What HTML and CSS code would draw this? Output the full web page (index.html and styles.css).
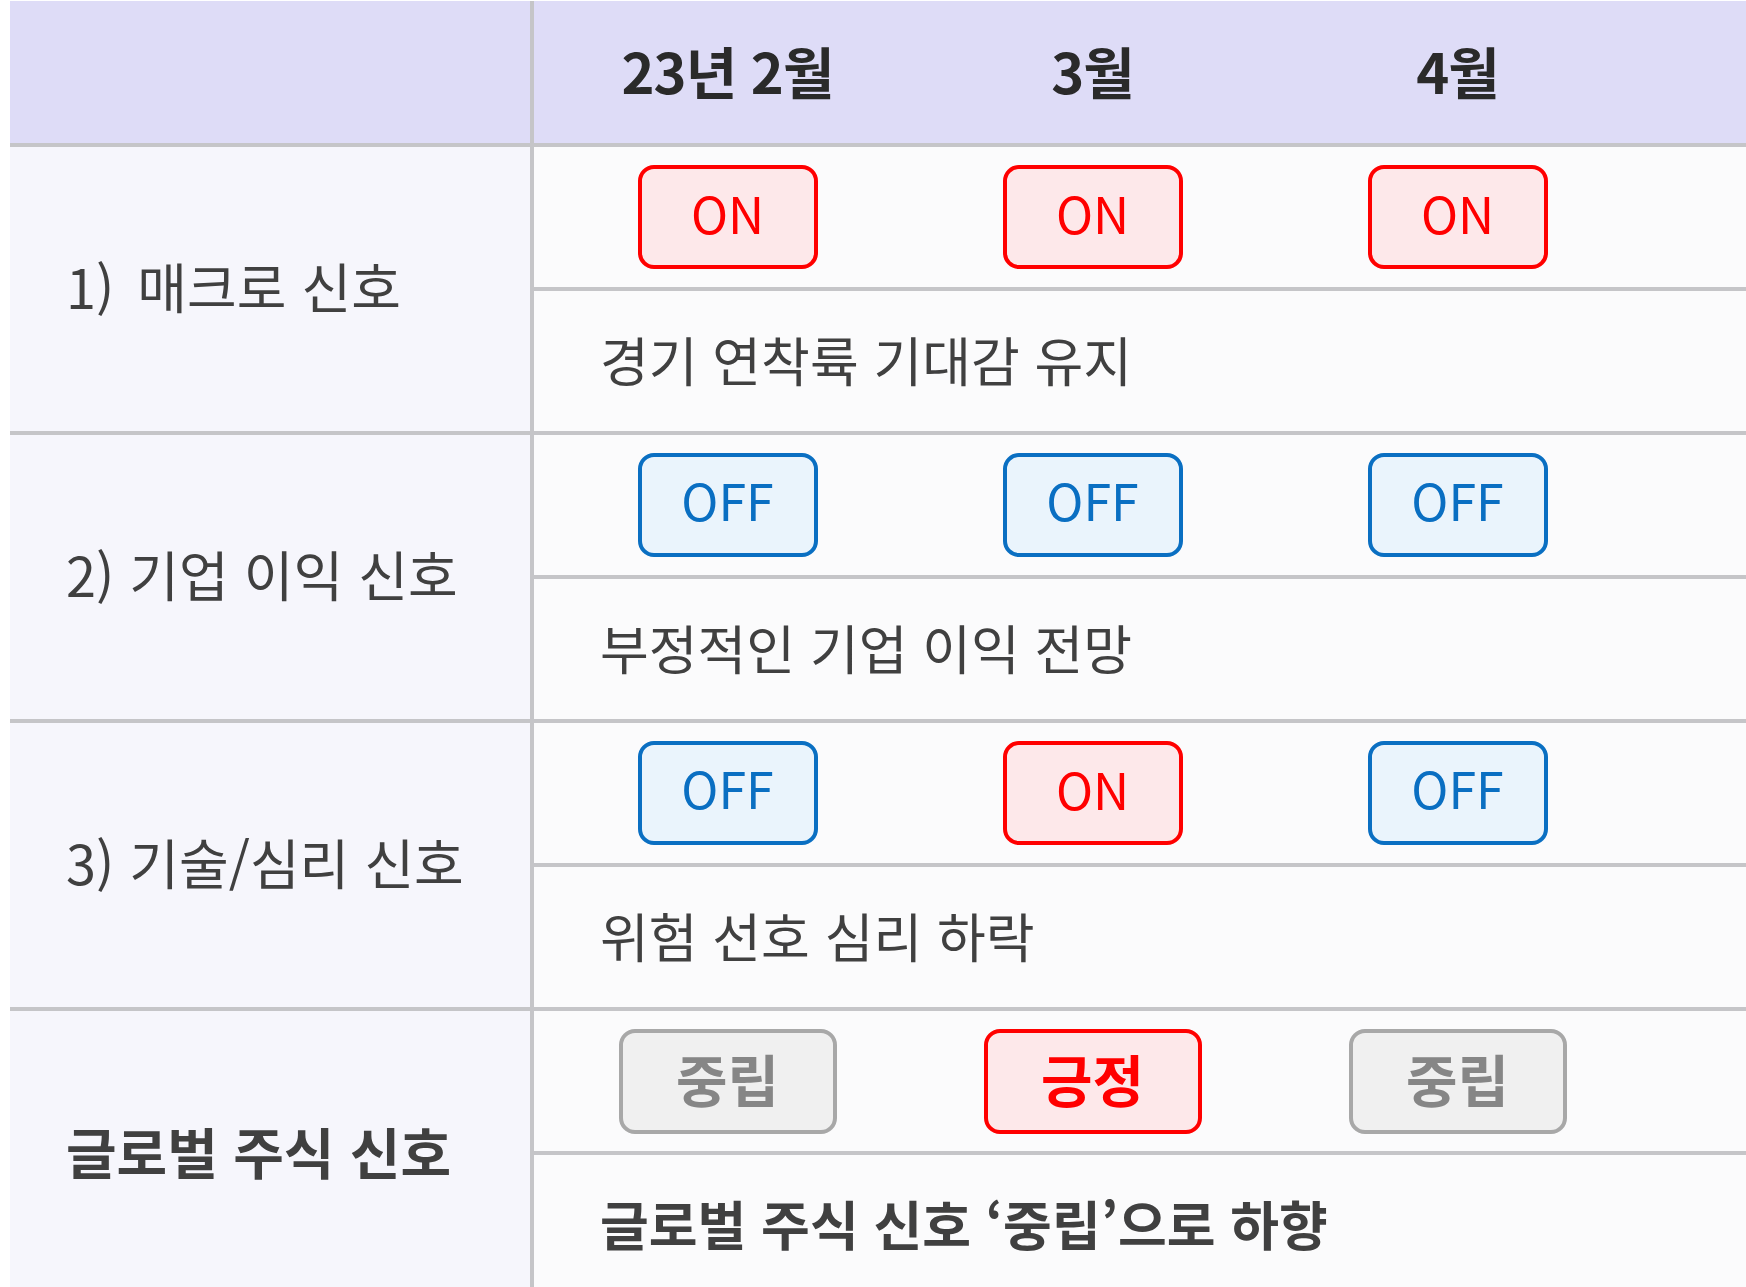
FILE: index.html
```html
<!DOCTYPE html>
<html lang="ko">
<head>
<meta charset="utf-8">
<title>글로벌 주식 신호</title>
<link rel="stylesheet" href="styles.css">
</head>
<body>
<div class="table">
  <div class="head">
    <div class="head-label"></div>
    <div class="months">
      <div class="month">23년 2월</div>
      <div class="month">3월</div>
      <div class="month">4월</div>
    </div>
  </div>

  <div class="group">
    <div class="label">1)<span class="gap"></span> 매크로 신호</div>
    <div class="badges">
      <span class="badge on">ON</span>
      <span class="badge on">ON</span>
      <span class="badge on">ON</span>
    </div>
    <div class="desc">경기 연착륙 기대감 유지</div>
  </div>

  <div class="group">
    <div class="label">2) 기업 이익 신호</div>
    <div class="badges">
      <span class="badge off">OFF</span>
      <span class="badge off">OFF</span>
      <span class="badge off">OFF</span>
    </div>
    <div class="desc">부정적인 기업 이익 전망</div>
  </div>

  <div class="group">
    <div class="label">3) 기술/심리 신호</div>
    <div class="badges">
      <span class="badge off">OFF</span>
      <span class="badge on">ON</span>
      <span class="badge off">OFF</span>
    </div>
    <div class="desc">위험 선호 심리 하락</div>
  </div>

  <div class="group">
    <div class="label bold">글로벌 주식 신호</div>
    <div class="badges">
      <span class="badge neutral">중립</span>
      <span class="badge positive">긍정</span>
      <span class="badge neutral">중립</span>
    </div>
    <div class="desc bold">글로벌 주식 신호 ‘중립’으로 하향</div>
  </div>
</div>
</body>
</html>
```

FILE: styles.css
```css
html, body {
  margin: 0;
  padding: 0;
  background: #ffffff;
}

body {
  font-family: "Noto Sans CJK KR", "Noto Sans", sans-serif;
  color: #404040;
  overflow: hidden;
}

.table {
  margin: 1px 0 0 10px;
  width: 1736px;
}

.head {
  display: grid;
  grid-template-columns: 524px 1fr;
  height: 142px;
  background: #dedcf7;
  border-bottom: 4px solid #c5c5c8;
}

.head-label {
  border-right: 4px solid #c5c5c8;
}

.months {
  display: grid;
  grid-template-columns: repeat(3, 365px);
  padding-left: 11px;
  align-items: center;
  justify-items: center;
}

.month {
  font-size: 56px;
  font-weight: 700;
  color: #2a2a2a;
  line-height: 1;
  letter-spacing: -1px;
  padding-bottom: 4px;
}

.group {
  display: grid;
  grid-template-columns: 524px 1fr;
  grid-template-rows: 144px 140px;
  border-bottom: 4px solid #c5c5c8;
}

.label {
  grid-row: span 2;
  background: #f6f6fc;
  border-right: 4px solid #c5c5c8;
  display: flex;
  align-items: center;
  padding-left: 56px;
  padding-bottom: 6px;
  font-size: 54px;
  line-height: 1;
  white-space: pre;
}

.label.bold {
  font-size: 55px;
}

.gap {
  display: inline-block;
  width: 8px;
}

.badges {
  background: #fbfbfc;
  border-bottom: 4px solid #c5c5c8;
  display: grid;
  grid-template-columns: repeat(3, 365px);
  padding-left: 11px;
  align-items: center;
  justify-items: center;
}

.desc {
  background: #fbfbfc;
  display: flex;
  align-items: center;
  padding-left: 66px;
  padding-bottom: 4px;
  font-size: 53px;
  line-height: 1;
}

.bold {
  font-weight: 700;
}

.badge {
  box-sizing: border-box;
  display: flex;
  align-items: center;
  justify-content: center;
  width: 180px;
  height: 104px;
  padding-bottom: 10px;
  border: 4px solid;
  border-radius: 16px;
  font-size: 50px;
  line-height: 1;
}

.on {
  color: #ff0000;
  border-color: #ff0000;
  background: #fde8ea;
}

.off {
  color: #0a6fc2;
  border-color: #0a6fc2;
  background: #eaf4fc;
  padding-bottom: 12px;
}

.neutral,
.positive {
  width: 218px;
  height: 105px;
  padding-bottom: 6px;
  font-weight: 700;
  font-size: 56px;
}

.neutral {
  color: #868686;
  border-color: #a8a8a8;
  background: #f0f0f0;
}

.positive {
  color: #ff0000;
  border-color: #ff0000;
  background: #fde8ea;
}
```
